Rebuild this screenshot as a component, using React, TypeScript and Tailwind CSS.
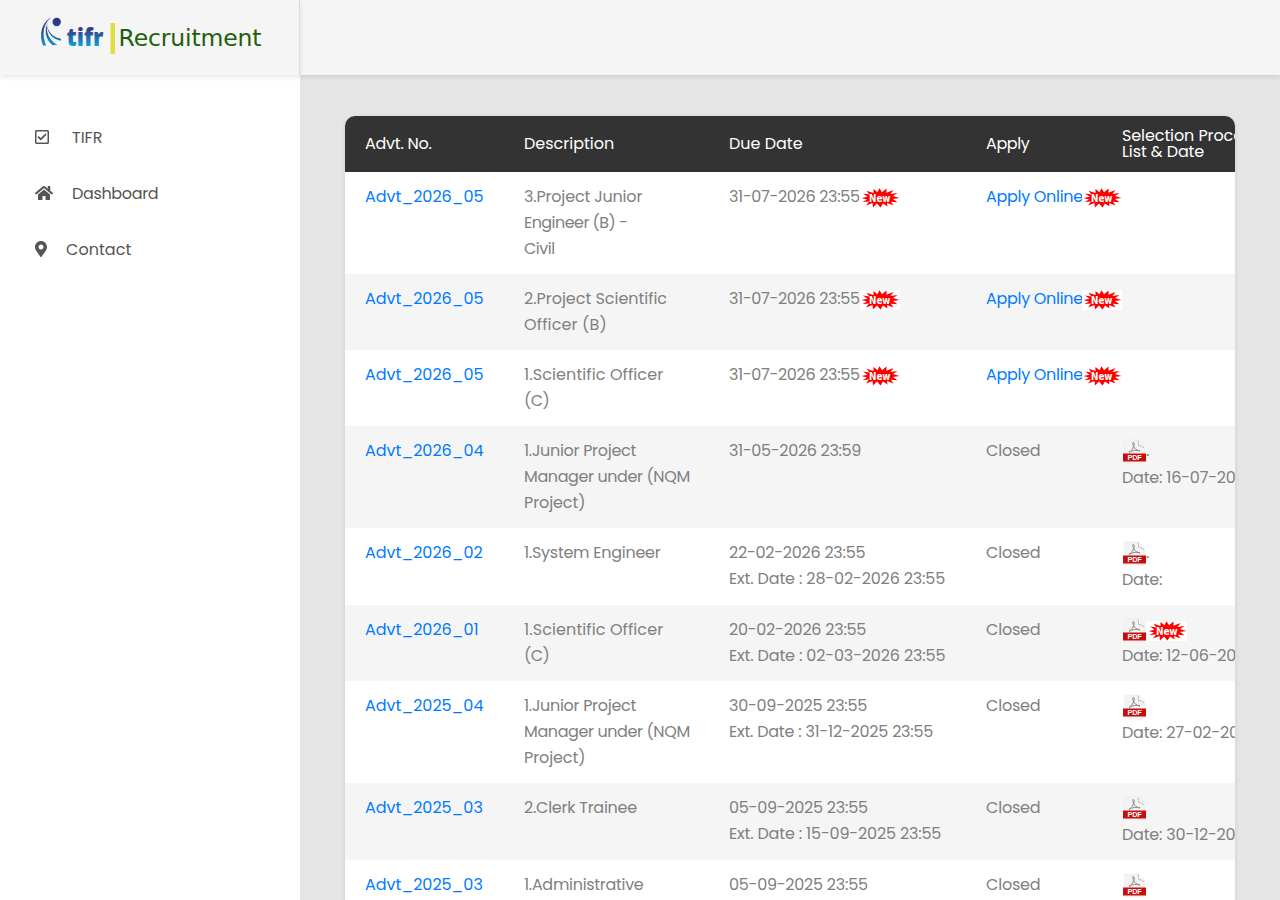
import { FaRegCheckSquare, FaHome, FaMapMarkerAlt } from "react-icons/fa";

type Line = { text: string; track: string; isNew?: boolean };

type Row = {
    advt: string;
    desc: Line[];
    due: Line[];
    open?: boolean;
    pdf?: { dot?: boolean; isNew?: boolean; date: string; tall?: boolean };
    height: string;
};

const d = (text: string, track = "tracking-normal"): Line => ({ text, track });
const t = (text: string, track = "tracking-[-0.25px]", isNew = false): Line => ({ text, track, isNew });

const rows: Row[] = [
    {
        advt: "Advt_2026_05",
        desc: [d("3.Project Junior", "tracking-[-0.18px]"), d("Engineer (B) -", "tracking-[-0.55px]"), d("Civil", "tracking-[-0.5px]")],
        due: [t("31-07-2026 23:55", "tracking-[-0.33px]", true)],
        open: true,
        height: "h-[102px]",
    },
    {
        advt: "Advt_2026_05",
        desc: [d("2.Project Scientific", "tracking-[-0.03px]"), d("Officer (B)", "tracking-[0.15px]")],
        due: [t("31-07-2026 23:55", "tracking-[-0.33px]", true)],
        open: true,
        height: "h-[76px]",
    },
    {
        advt: "Advt_2026_05",
        desc: [d("1.Scientific Officer", "tracking-[0.1px]"), d("(C)", "tracking-[-0.6px]")],
        due: [t("31-07-2026 23:55", "tracking-[-0.33px]", true)],
        open: true,
        height: "h-[76px]",
    },
    {
        advt: "Advt_2026_04",
        desc: [d("1.Junior Project", "tracking-[-0.3px]"), d("Manager under (NQM", "tracking-[-0.4px]"), d("Project)", "tracking-[-0.1px]")],
        due: [t("31-05-2026 23:59", "tracking-[-0.33px]")],
        pdf: { dot: true, date: "Date: 16-07-2026", tall: true },
        height: "h-[102px]",
    },
    {
        advt: "Advt_2026_02",
        desc: [d("1.System Engineer", "tracking-[-0.27px]")],
        due: [t("22-02-2026 23:55"), t("Ext. Date : 28-02-2026 23:55", "tracking-[-0.15px]")],
        pdf: { dot: true, date: "Date:", tall: true },
        height: "h-[77px]",
    },
    {
        advt: "Advt_2026_01",
        desc: [d("1.Scientific Officer", "tracking-[0.1px]"), d("(C)", "tracking-[-0.6px]")],
        due: [t("20-02-2026 23:55"), t("Ext. Date : 02-03-2026 23:55", "tracking-[-0.15px]")],
        pdf: { isNew: true, date: "Date: 12-06-2026" },
        height: "h-[76px]",
    },
    {
        advt: "Advt_2025_04",
        desc: [d("1.Junior Project", "tracking-[-0.3px]"), d("Manager under (NQM", "tracking-[-0.4px]"), d("Project)", "tracking-[-0.1px]")],
        due: [t("30-09-2025 23:55"), t("Ext. Date : 31-12-2025 23:55", "tracking-[-0.23px]")],
        pdf: { date: "Date: 27-02-2026", tall: true },
        height: "h-[102px]",
    },
    {
        advt: "Advt_2025_03",
        desc: [d("2.Clerk Trainee", "tracking-[-0.25px]")],
        due: [t("05-09-2025 23:55"), t("Ext. Date : 15-09-2025 23:55", "tracking-[-0.17px]")],
        pdf: { date: "Date: 30-12-2025", tall: true },
        height: "h-[77px]",
    },
    {
        advt: "Advt_2025_03",
        desc: [d("1.Administrative", "tracking-[-0.3px]")],
        due: [t("05-09-2025 23:55")],
        pdf: { date: "", tall: true },
        height: "h-[77px]",
    },
];

export default function App() {
    return (
        <div className="flex h-[900px] w-[1280px] overflow-hidden bg-[#e5e5e5] text-base [font-family:Poppins,Inter,'Liberation_Sans',sans-serif]">
            <aside className="flex w-[300px] shrink-0 flex-col bg-white">
                <div className="relative z-10 h-[75px] border-r border-[#dcdcdc] bg-[#f5f5f5] pl-9 pt-3 shadow-[0_2px_5px_rgba(0,0,0,0.1)]">
                    <Logo />
                </div>
                <nav className="flex flex-col pl-[35px] pt-[34px] text-[#555]">
                    <a className="flex h-14 items-center">
                        <span className="w-[37px]"><FaRegCheckSquare size={16} className="-ml-px" /></span>
                        <span className="pt-0.5">TIFR</span>
                    </a>
                    <a className="flex h-14 items-center">
                        <span className="w-[37px]"><FaHome size={18} /></span>
                        <span className="pt-0.5 tracking-[-0.35px]">Dashboard</span>
                    </a>
                    <a className="flex h-14 items-center">
                        <span className="w-[31px]"><FaMapMarkerAlt size={16} className="-ml-0.5" /></span>
                        <span className="pt-0.5 tracking-[0.05px]">Contact</span>
                    </a>
                </nav>
            </aside>

            <div className="flex min-w-0 flex-1 flex-col">
                <header className="h-[75px] shrink-0 bg-[#f5f5f5] shadow-[0_2px_5px_rgba(0,0,0,0.1)]" />
                <main className="px-[45px] pt-[41px]">
                    <div className="overflow-hidden rounded-t-[10px] shadow-[0_2px_5px_rgba(0,0,0,0.1)]">
                        <div className="grid h-14 grid-cols-[159px_205px_257px_136px_200px] items-center bg-[#333] pl-5 leading-4 text-white">
                            <span className="tracking-[-0.25px]">Advt. No.</span>
                            <span>Description</span>
                            <span>Due Date</span>
                            <span className="tracking-[-0.4px]">Apply</span>
                            <span className="whitespace-nowrap tracking-[-0.1px]">Selection Process /<br />List &amp; Date</span>
                        </div>
                        {rows.map((row, i) => (
                            <TableRow key={i} row={row} odd={i % 2 === 1} />
                        ))}
                    </div>
                </main>
            </div>
        </div>
    );
}

function TableRow({ row, odd }: { row: Row; odd: boolean }) {
    return (
        <div className={`grid grid-cols-[159px_205px_257px_136px_200px] whitespace-nowrap pl-5 pt-3 leading-[26px] text-[#808080] ${row.height} ${odd ? 'bg-[#f5f5f5]' : 'bg-white'}`}>
            <a className="text-[#007bff]">{row.advt}</a>
            <div>
                {row.desc.map(line => (
                    <div key={line.text} className={line.track}>{line.text}</div>
                ))}
            </div>
            <div>
                {row.due.map(line => (
                    <div key={line.text} className="flex h-[26px]">
                        <span className={line.isNew ? `w-[131px] ${line.track}` : line.track}>{line.text}</span>
                        {line.isNew && <NewBadge />}
                    </div>
                ))}
            </div>
            {row.open ? (
                <div className="flex h-[26px]">
                    <a className="w-24 tracking-[-0.3px] text-[#007bff]">Apply Online</a>
                    <NewBadge />
                </div>
            ) : (
                <span className="tracking-[-0.2px]">Closed</span>
            )}
            {row.pdf && (
                <div className="tracking-[-0.2px]">
                    <div className={`flex ${row.pdf.tall ? 'h-[27px]' : 'h-[26px]'}`}>
                        <PdfIcon />
                        {row.pdf.dot && <span className="-ml-px">.</span>}
                        {row.pdf.isNew && <NewBadge />}
                    </div>
                    <div>{row.pdf.date}</div>
                </div>
            )}
        </div>
    );
}

function NewBadge() {
    return (
        <svg width="40" height="20" viewBox="0 0 40 20" className="mt-1 shrink-0 bg-white">
            <path fill="#f00" d="M1.500 10l6-1.200L3 5.500l6.500 1L6.500 2.800l7 2.200L13.500 1l4 3.300L19.500.3l2.500 4L26.500.5v4.200L33.500 2 30.500 6l7-1-4.500 3 6.500 2-6.500 1 4.500 3.300-6.500-.5 2.500 3.800-6.500-2.600.5 3.400-4.500-3-2.500 4-3.500-4L13 19.500l-.5-4.500-6.500 2.500 3-4-6.500.5 4.500-2.600z" />
            <text x="9" y="14" fill="#fff" fontSize="10" fontWeight="bold" fontFamily="DejaVu Sans" textLength="21.500" lengthAdjust="spacingAndGlyphs">New</text>
        </svg>
    );
}

function PdfIcon() {
    return (
        <svg width="25" height="25" viewBox="0 0 25 25" className="mt-px shrink-0">
            <path d="M2.500 1h14l6 6v17h-20z" fill="#f3f3f3" stroke="#e9e9e9" strokeWidth=".6" />
            <path d="M16 1.500q1 3 .5 5 3-.5 5.500 2.500" fill="#fff" stroke="#b5b5b5" strokeWidth=".9" />
            <path d="M7 13.500c3-2 6-7 5-9.500-1.500-2-1.500 1-.5 3 1 3 3 4.500 6.500 5-3-1.500-8-.5-11 1.500z" fill="none" stroke="#888" strokeWidth="1" />
            <path d="M1 14.500h23v8H1z" fill="#c80d0d" />
            <text x="5.500" y="21.200" fill="#fff" fontSize="6.800" fontWeight="bold" fontFamily="Liberation Sans" textLength="14" lengthAdjust="spacingAndGlyphs">PDF</text>
        </svg>
    );
}

function Logo() {
    return (
        <svg width="230" height="45" viewBox="36 12 230 45">
            <defs>
                <linearGradient id="tifr" gradientUnits="userSpaceOnUse" x1="0" y1="18" x2="0" y2="47">
                    <stop offset="0" stopColor="#2e3080" />
                    <stop offset=".4" stopColor="#2c4b92" />
                    <stop offset="1" stopColor="#00a5dd" />
                </linearGradient>
                <linearGradient id="word" gradientUnits="userSpaceOnUse" x1="0" y1="26" x2="0" y2="46">
                    <stop offset="0" stopColor="#2e3080" />
                    <stop offset=".45" stopColor="#2c5ba0" />
                    <stop offset="1" stopColor="#00a5dd" />
                </linearGradient>
            </defs>
            <g fill="url(#tifr)">
                <circle cx="56.700" cy="22" r="4.200" />
                <path d="M51.500 17c-9.500 5-13 17-8.500 28.500h3.200C41.500 34 43 24 51.500 17z" />
                <path d="M48.500 20.500c-6 9-3 20 4 25h7C50.500 42 44.500 32 48.500 20.500z" stroke="#f5f5f5" strokeWidth=".8" />
                <path d="M47 25.500c.8 8.500 6 14 14 15.200v-2C54 37.500 48.500 33 47 25.500z" />
            </g>
            <text x="66.500" y="45.500" fill="url(#word)" fontSize="25" fontWeight="800" fontFamily="Open Sans" textLength="37" lengthAdjust="spacingAndGlyphs">tifr</text>
            <path d="M110.500 23h4.500v31h-4.500z" fill="#dfdf3c" />
            <text x="118.500" y="45.500" fill="#20600a" fontSize="23.500" fontFamily="DejaVu Sans" textLength="143">Recruitment</text>
        </svg>
    );
}
